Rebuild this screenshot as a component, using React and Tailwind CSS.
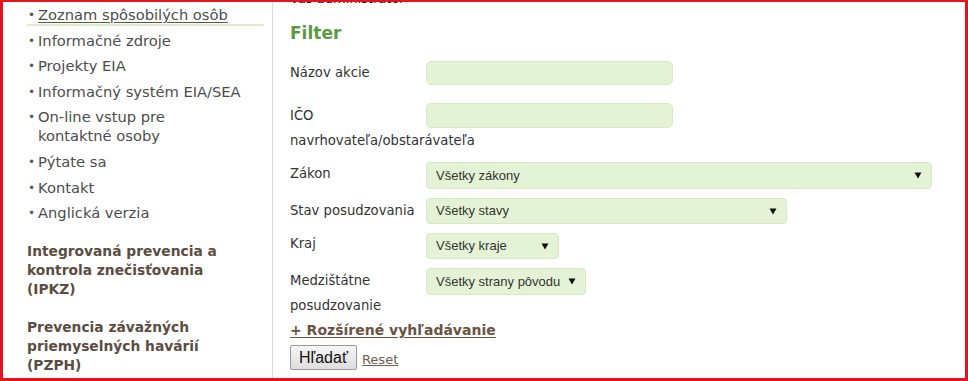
import React from "react";

const V = { fontFamily: '"DejaVu Sans", Verdana, sans-serif' };
const A = { fontFamily: '"Liberation Sans", Arial, sans-serif' };

function Arrow() {
  return (
    <svg width="8" height="7" viewBox="0 0 8 7" className="shrink-0">
      <path d="M0.5 0.5 H7.5 L4 6.5 Z" fill="#111" />
    </svg>
  );
}

function Select({ text, w, h }) {
  return (
    <div
      className={`flex items-center justify-between bg-[#e4f3d5] border border-[#d5e9c6] rounded-[4px] pl-[9px] pr-[9px] text-[13px] text-[#333] ${w} ${h}`}
      style={A}
    >
      <span>{text}</span>
      <Arrow />
    </div>
  );
}

function Input({ h }) {
  return (
    <div className={`w-[247px] ${h} bg-[#e4f3d5] border border-[#d5e9c6] rounded-[5px]`} />
  );
}

const navItems = [
  ["Zoznam spôsobilých osôb", true],
  ["Informačné zdroje"],
  ["Projekty EIA"],
  ["Informačný systém EIA/SEA"],
  ["On-line vstup pre\nkontaktné osoby"],
  ["Pýtate sa"],
  ["Kontakt"],
  ["Anglická verzia"],
];

export default function App() {
  return (
    <div
      className="w-[968px] h-[381px] overflow-hidden bg-white border-[#e3141b] border-l-[3px] border-t-[2px] border-r-[3px] border-b-[3px] flex"
      style={V}
    >
      {/* Sidebar */}
      <div className="w-[270px] shrink-0 border-r border-[#dcdcdc] pt-[3px] pl-[24px] pr-[8px]">
        <ul className="flex flex-col gap-[6.6px] text-[14.7px] leading-[19px] text-[#4d4d4d]">
          {navItems.map(([t, active], i) => (
            <li
              key={i}
              className={`flex items-start pl-[1px] ${active ? "shadow-[0_2px_0_#dcedcf]" : ""}`}
            >
              <span className="w-[10px] h-[19px] shrink-0 text-[12px] leading-[17px] pt-[2px] text-[#5a5a5a]">•</span>
              <span
                className={`whitespace-pre-line ${active ? "underline decoration-[#5b5b3b] underline-offset-[2px]" : ""}`}
              >
                {t}
              </span>
            </li>
          ))}
        </ul>
        <div className="mt-[20px] text-[13.8px] leading-[19px] font-bold text-[#5b4d3f]">
          Integrovaná prevencia a<br />kontrola znečisťovania<br />(IPKZ)
        </div>
        <div className="mt-[19px] text-[13.8px] leading-[19px] font-bold text-[#5b4d3f]">
          Prevencia závažných<br />priemyselných havárií<br />(PZPH)
        </div>
      </div>

      {/* Content */}
      <div className="flex-1 pl-[17px] text-[13.2px] text-[#333]">
        <div className="mt-[-11px] h-[16px] text-[13px] leading-[16px] text-[#111]">Váš administrátor</div>
        <div className="mt-[15px] text-[17px] leading-[22px] font-bold text-[#5c9a41]">Filter</div>

        <div className="mt-[17px] flex items-start">
          <div className="w-[136px] shrink-0 leading-[24px]">Názov akcie</div>
          <Input h="h-[24px]" />
        </div>

        <div className="mt-[18px] flex items-start h-[50px]">
          <div className="w-[136px] shrink-0 leading-[25px] whitespace-nowrap">
            IČO<br />navrhovateľa/obstarávateľa
          </div>
          <Input h="h-[25px]" />
        </div>

        <div className="mt-[9px] flex items-start">
          <div className="w-[136px] shrink-0 leading-[24px]">Zákon</div>
          <Select text="Všetky zákony" w="w-[506px]" h="h-[27px]" />
        </div>

        <div className="mt-[9px] flex items-start">
          <div className="w-[136px] shrink-0 leading-[26px]">Stav posudzovania</div>
          <Select text="Všetky stavy" w="w-[361px]" h="h-[26px]" />
        </div>

        <div className="mt-[9px] flex items-start">
          <div className="w-[136px] shrink-0 leading-[22px]">Kraj</div>
          <Select text="Všetky kraje" w="w-[133px]" h="h-[26px]" />
        </div>

        <div className="mt-[9px] flex items-start h-[50px]">
          <div className="w-[136px] shrink-0 leading-[25px]">
            Medzištátne<br />posudzovanie
          </div>
          <Select text="Všetky strany pôvodu" w="w-[160px]" h="h-[27px]" />
        </div>

        <div className="mt-[3px] text-[14px] leading-[19px] font-bold text-[#6a5342] underline underline-offset-[2px]">
          + Rozšírené vyhľadávanie
        </div>

        <div className="mt-[5px] flex items-end gap-[5px]">
          <button
            className="h-[25px] px-[8px] border border-[#9a9a9a] rounded-[2px] bg-gradient-to-b from-[#f6f6f6] to-[#dedede] text-[16px] leading-[20px] text-[#111]"
            style={A}
          >
            Hľadať
          </button>
          <a className="text-[13px] leading-[18px] text-[#6d6054] underline mb-[1px]">Reset</a>
        </div>
      </div>
    </div>
  );
}
